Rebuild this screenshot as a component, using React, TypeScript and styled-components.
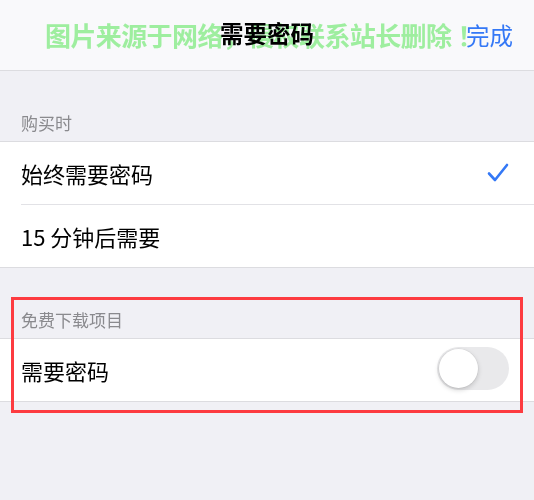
import React from "react";
import styled, { createGlobalStyle } from "styled-components";

const GlobalStyle = createGlobalStyle`
  html, body {
    margin: 0;
    padding: 0;
    background: #f0f0f5;
  }
  body {
    font-family: "Noto Sans CJK SC", "Noto Sans", "Liberation Sans", sans-serif;
    -webkit-font-smoothing: antialiased;
  }
`;

const Page = styled.div`
  position: relative;
  min-height: 500px;
  width: 534px;
  background: #f0f0f5;
  overflow: hidden;
`;

const NavBar = styled.header`
  height: 71px;
  box-sizing: border-box;
  padding: 0 21px 4px;
  display: grid;
  grid-template-columns: 1fr auto 1fr;
  align-items: center;
  background: #f9f9fb;
  border-bottom: 1px solid #dcdce0;
`;

const NavTitle = styled.h1`
  grid-column: 2;
  margin: 0;
  font-size: 23.5px;
  font-weight: 600;
  color: #000;
  letter-spacing: 0;
  line-height: 30px;
`;

const NavAction = styled.button`
  grid-column: 3;
  justify-self: end;
  border: 0;
  background: none;
  padding: 0;
  font-family: inherit;
  font-size: 23.5px;
  line-height: 30px;
  color: #3478f6;
  margin-top: 4px;
`;

const SectionHeader = styled.div`
  height: 70px;
  box-sizing: border-box;
  padding: 0 21px 8px;
  display: flex;
  align-items: flex-end;
  font-size: 17px;
  line-height: 20px;
  color: #8a8a8e;
`;

const Group = styled.section`
  background: #fff;
  border-top: 1px solid #dcdce0;
  border-bottom: 1px solid #dcdce0;
`;

const Row = styled.div`
  padding-left: 21px;
  display: flex;
`;

const RowContent = styled.div`
  flex: 1;
  height: 62px;
  display: flex;
  align-items: center;
  justify-content: space-between;
  padding-right: 25px;
  border-bottom: 1px solid #e2e2e6;

  ${Row}:last-child & {
    border-bottom: 0;
  }
`;

const RowLabel = styled.span`
  font-size: 22px;
  line-height: 28px;
  color: #000;
`;

const Toggle = styled.div<{ $on?: boolean }>`
  width: 72px;
  height: 43px;
  box-sizing: border-box;
  border-radius: 22px;
  padding: 2px;
  display: flex;
  justify-content: ${(p) => (p.$on ? "flex-end" : "flex-start")};
  background: ${(p) => (p.$on ? "#34c759" : "#e9e9eb")};
  margin-top: -3px;
`;

const Knob = styled.span`
  width: 39px;
  height: 39px;
  border-radius: 50%;
  background: #fff;
  box-shadow: 0 2px 5px rgba(0, 0, 0, 0.18), 0 0 0 0.5px rgba(0, 0, 0, 0.06);
`;

const Highlight = styled.div`
  position: absolute;
  left: 11px;
  top: 297px;
  width: 512px;
  height: 116px;
  box-sizing: border-box;
  border: 3px solid #fd3b40;
  pointer-events: none;
`;

const Watermark = styled.div`
  position: absolute;
  left: 45px;
  top: 20px;
  font-size: 26px;
  line-height: 30px;
  font-weight: 700;
  letter-spacing: -0.6px;
  color: #a2f4a2;
  mix-blend-mode: multiply;
  white-space: nowrap;
  pointer-events: none;
`;

const WatermarkMark = styled.span`
  margin-left: 6px;
`;

const Check = () => (
  <svg width="22" height="20" viewBox="0 0 22 20" fill="none">
    <polyline
      points="2,10.5 8,17 20,2"
      stroke="#3478f6"
      strokeWidth="2.6"
      strokeLinecap="round"
      strokeLinejoin="round"
    />
  </svg>
);

export default function App() {
  return (
    <>
      <GlobalStyle />
      <Page>
        <NavBar>
          <NavTitle>需要密码</NavTitle>
          <NavAction>完成</NavAction>
        </NavBar>

        <SectionHeader>购买时</SectionHeader>
        <Group>
          <Row>
            <RowContent>
              <RowLabel>始终需要密码</RowLabel>
              <Check />
            </RowContent>
          </Row>
          <Row>
            <RowContent>
              <RowLabel>15 分钟后需要</RowLabel>
            </RowContent>
          </Row>
        </Group>

        <SectionHeader>免费下载项目</SectionHeader>
        <Group>
          <Row>
            <RowContent>
              <RowLabel>需要密码</RowLabel>
              <Toggle>
                <Knob />
              </Toggle>
            </RowContent>
          </Row>
        </Group>

        <Highlight />
        <Watermark>
          图片来源于网络，侵权联系站长删除<WatermarkMark>！</WatermarkMark>
        </Watermark>
      </Page>
    </>
  );
}
